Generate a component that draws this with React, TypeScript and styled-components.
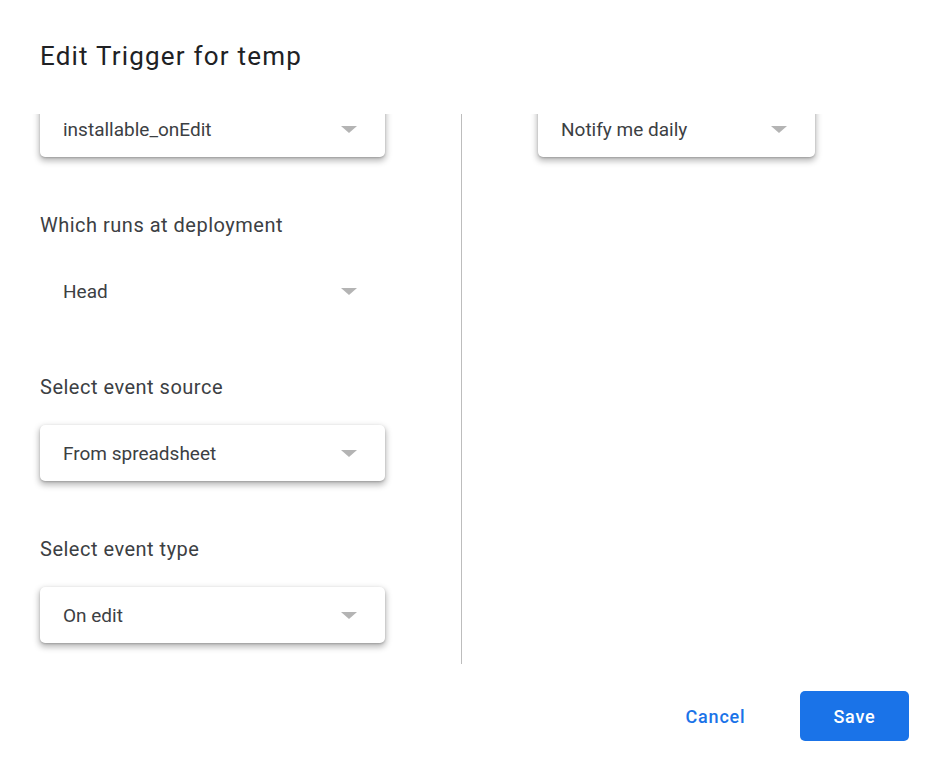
import { useLayoutEffect, useRef } from "react";
import styled, { createGlobalStyle } from "styled-components";

const GlobalStyle = createGlobalStyle`
  html, body {
    margin: 0;
    padding: 0;
    background: #ffffff;
  }
  body {
    font-family: Roboto, "Liberation Sans", Arial, sans-serif;
    color: #202124;
  }
`;

const Dialog = styled.div`
  width: 931px;
  height: 769px;
  display: flex;
  flex-direction: column;
  background: #ffffff;
`;

const Title = styled.h1`
  margin: 0;
  padding: 40px 40px 0;
  height: 114px;
  box-sizing: border-box;
  font-size: 26px;
  line-height: 32px;
  font-weight: 400;
  letter-spacing: 1.2px;
  color: #202124;
`;

const Body = styled.div`
  height: 550px;
  flex: none;
  overflow-y: auto;
  scrollbar-width: none;
  display: grid;
  grid-template-columns: 462px 1fr;
  &::-webkit-scrollbar {
    display: none;
  }
`;

const Column = styled.div<{ $divider?: boolean }>`
  display: flex;
  flex-direction: column;
  gap: 53px;
  padding: 0 0 24px ${(p) => (p.$divider ? "40px" : "76px")};
  border-right: ${(p) => (p.$divider ? "1px solid #bdbdbd" : "none")};
`;

const Field = styled.div`
  display: flex;
  flex-direction: column;
  gap: 23px;
`;

const Label = styled.div`
  font-size: 20px;
  line-height: 30px;
  letter-spacing: 0.5px;
  color: #3c4043;
`;

const Select = styled.div<{ $flat?: boolean; $width: number }>`
  width: ${(p) => p.$width}px;
  height: 56px;
  box-sizing: border-box;
  padding: 0 28px 0 23px;
  display: flex;
  align-items: center;
  justify-content: space-between;
  border-radius: 5px;
  background: #ffffff;
  box-shadow: ${(p) =>
    p.$flat
      ? "none"
      : "0 1px 2px rgba(0,0,0,0.18), 0 3px 6px 1px rgba(0,0,0,0.28)"};
  font-size: 19px;
  color: #3c4043;
`;

const Arrow = styled.span`
  width: 0;
  height: 0;
  border-left: 8px solid transparent;
  border-right: 8px solid transparent;
  border-top: 7px solid #b4b4b4;
`;

const Footer = styled.div`
  flex: 1;
  display: flex;
  justify-content: flex-end;
  align-items: flex-start;
  gap: 30px;
  padding: 27px 22px 0 0;
`;

const Button = styled.button<{ $primary?: boolean }>`
  height: 50px;
  min-width: 109px;
  padding: 0 24px;
  border: none;
  border-radius: 5px;
  font-family: Roboto, "Liberation Sans", Arial, sans-serif;
  font-size: 18px;
  font-weight: 500;
  letter-spacing: 0.8px;
  cursor: pointer;
  background: ${(p) => (p.$primary ? "#1a73e8" : "transparent")};
  color: ${(p) => (p.$primary ? "#ffffff" : "#1a73e8")};
`;

interface SelectFieldProps {
  label?: string;
  value: string;
  width: number;
  flat?: boolean;
}

const SelectField = ({ label, value, width, flat }: SelectFieldProps) => (
  <Field>
    {label && <Label>{label}</Label>}
    <Select $width={width} $flat={flat}>
      <span>{value}</span>
      <Arrow />
    </Select>
  </Field>
);

export default function App() {
  const bodyRef = useRef<HTMLDivElement>(null);

  // the dialog is scrolled a little, so the first selects sit under the title
  useLayoutEffect(() => {
    if (bodyRef.current) bodyRef.current.scrollTop = 13;
  }, []);

  return (
    <>
      <GlobalStyle />
      <Dialog>
        <Title>Edit Trigger for temp</Title>
        <Body ref={bodyRef}>
          <Column $divider>
            <SelectField value="installable_onEdit" width={345} />
            <SelectField label="Which runs at deployment" value="Head" width={345} flat />
            <SelectField label="Select event source" value="From spreadsheet" width={345} />
            <SelectField label="Select event type" value="On edit" width={345} />
          </Column>
          <Column>
            <SelectField value="Notify me daily" width={277} />
          </Column>
        </Body>
        <Footer>
          <Button type="button">Cancel</Button>
          <Button type="button" $primary>
            Save
          </Button>
        </Footer>
      </Dialog>
    </>
  );
}
